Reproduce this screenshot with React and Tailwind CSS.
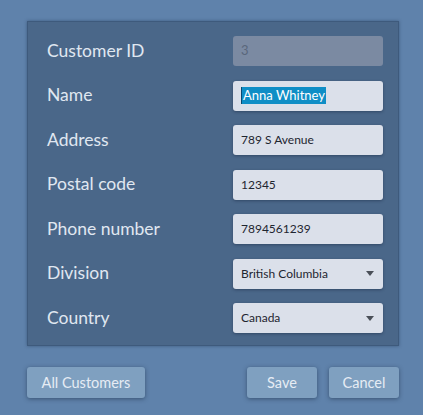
import React from "react";

const rows = [
  { label: "Customer ID", type: "disabled", value: "3" },
  { label: "Name", type: "selected", value: "Anna Whitney" },
  { label: "Address", type: "text", value: "789 S Avenue" },
  { label: "Postal code", type: "text", value: "12345" },
  { label: "Phone number", type: "text", value: "7894561239" },
  { label: "Division", type: "select", value: "British Columbia" },
  { label: "Country", type: "select", value: "Canada" },
];

function Field({ type, value }) {
  if (type === "disabled") {
    return (
      <div className="h-[30px] w-[150px] rounded-[3px] bg-[#7b8aa2] flex items-center px-2 text-[13px] text-[#5a677c]">
        {value}
      </div>
    );
  }
  const base =
    "h-[30px] w-[150px] rounded-[3px] bg-[#dbe0ea] flex items-center px-2 text-[12px] text-[#1e2530] shadow-[0_1px_3px_rgba(20,35,60,0.45)]";
  if (type === "selected") {
    return (
      <div className={base}>
        <span className="bg-[#0f8ec6] text-white text-[13px] leading-[17px] px-[1px] border-l border-[#0a4a70]">{value}</span>
      </div>
    );
  }
  if (type === "select") {
    return (
      <div className={base + " justify-between pr-[9px]"}>
        <span>{value}</span>
        <span className="w-0 h-0 border-l-[4.5px] border-r-[4.5px] border-t-[5px] border-l-transparent border-r-transparent border-t-[#4a4f58]" />
      </div>
    );
  }
  return <div className={base}>{value}</div>;
}

export default function App() {
  return (
    <div
      className="w-[423px] h-[415px] bg-[#5f82ab] pt-[21px] pl-[27px] overflow-hidden"
      style={{ fontFamily: "Lato, 'Open Sans', sans-serif" }}
    >
      <div className="w-[372px] h-[325px] bg-[#4a6789] border border-[#3e5a7c] shadow-[0_0_3px_rgba(30,50,80,0.5)] pt-[14px] pl-[19px] pr-[15px] flex flex-col gap-[14.5px]">
        {rows.map((r) => (
          <div key={r.label} className="flex items-center justify-between h-[30px]">
            <span className="text-[17.5px] text-[#e0e7f1]">{r.label}</span>
            <Field type={r.type} value={r.value} />
          </div>
        ))}
      </div>
      <div className="mt-[21px] w-[372px] flex items-center">
        <button className="h-[31px] w-[118px] rounded-[3px] bg-[#7fa0c0] text-[#e6ecf4] text-[14.5px] shadow-[0_1px_4px_rgba(20,35,60,0.5)]">
          All Customers
        </button>
        <div className="ml-auto flex gap-[12px]">
          <button className="h-[31px] w-[70px] rounded-[3px] bg-[#7fa0c0] text-[#e6ecf4] text-[14.5px] shadow-[0_1px_4px_rgba(20,35,60,0.5)]">
            Save
          </button>
          <button className="h-[31px] w-[70px] rounded-[3px] bg-[#7fa0c0] text-[#e6ecf4] text-[14.5px] shadow-[0_1px_4px_rgba(20,35,60,0.5)]">
            Cancel
          </button>
        </div>
      </div>
    </div>
  );
}
